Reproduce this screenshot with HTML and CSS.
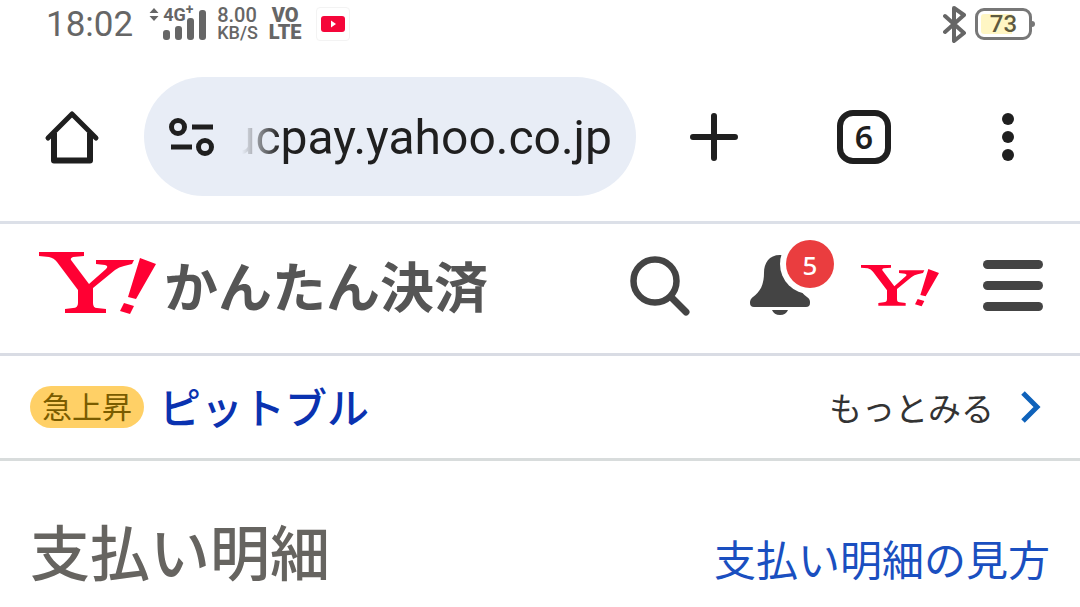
FILE: index.html
```html
<!DOCTYPE html>
<html lang="ja">
<head>
    <meta charset="utf-8">
    <meta name="viewport" content="width=device-width, initial-scale=1">
    <title>支払い明細</title>
    <link rel="stylesheet" href="styles.css">
</head>
<body>
    <div class="status">
        <span class="time">18:02</span>
        <div class="signal">
            <svg width="10" height="14" viewBox="0 0 10 14"><path d="M5 0l4.500 5h-9zM5 13l4.500-5h-9z" fill="#666"/></svg>
            <div class="net">
                <svg width="46" height="32" viewBox="0 0 46 32" fill="#666">
                    <rect x="0" y="22" width="7" height="10" rx="3"/>
                    <rect x="12" y="18" width="7" height="14" rx="3"/>
                    <rect x="24" y="10" width="7" height="22" rx="3"/>
                    <rect x="36" y="2" width="7" height="30" rx="3"/>
                </svg>
                <span class="net-type">4G<sup>+</sup></span>
            </div>
        </div>
        <div class="speed"><span>8.00</span><span class="unit">KB/S</span></div>
        <div class="volte"><span>VO</span><span>LTE</span></div>
        <div class="app">
            <svg width="26" height="18" viewBox="0 0 26 18"><rect x="1" y="1" width="24" height="16" rx="3" fill="#f5063a"/><path d="M11 5.500v7l5-3.500z" fill="#fff"/></svg>
        </div>
        <div class="status-right">
            <svg width="24" height="38" viewBox="0 0 24 38" fill="none" stroke="#666" stroke-width="4" stroke-linejoin="round" stroke-linecap="round"><path d="M2 11l19 17-10 8V3l10 7L2 27"/></svg>
            <div class="battery"><span>73</span></div>
        </div>
    </div>

    <div class="toolbar">
        <button class="tool" aria-label="ホーム">
            <svg width="56" height="58" viewBox="0 0 56 58" fill="none" stroke="#1f1f1f" stroke-width="6" stroke-linejoin="round"><path d="M4 30L28 6l24 24" stroke-width="5" stroke-linecap="round"/><path d="M10 25v27.500h36V25"/></svg>
        </button>
        <div class="address">
            <svg width="48" height="40" viewBox="0 0 48 40" fill="none" stroke="#1f1f1f" stroke-width="5"><circle cx="10" cy="10" r="6.500"/><circle cx="37" cy="30" r="6.500"/><path d="M24 10h21M3 30h21"/></svg>
            <input type="text" class="url" aria-label="アドレス" value="ucpay.yahoo.co.jp">
        </div>
        <div class="tools">
            <button class="tool" aria-label="新しいタブ">
                <svg width="48" height="48" viewBox="0 0 48 48" stroke="#1f1f1f" stroke-width="6" stroke-linecap="round"><path d="M3 24h42M24 3v42"/></svg>
            </button>
            <button class="tool tabs" aria-label="タブ一覧">6</button>
            <button class="tool dots" aria-label="メニュー">
                <svg width="12" height="48" viewBox="0 0 12 48" fill="#1f1f1f"><circle cx="6" cy="6" r="6"/><circle cx="6" cy="24" r="6"/><circle cx="6" cy="42" r="6"/></svg>
            </button>
        </div>
    </div>

    <!-- Y! ロゴ -->
    <svg class="defs" width="0" height="0">
        <symbol id="logo" viewBox="0 0 117 63">
            <path fill="#ff0033" d="M0 0H45V4L34 5Q31 6 32 8L50 32L67 17Q70 14 66 13L57 12V8H95L93 12L85 14Q80 15 76 18L54 36V51Q54 56 58 56L67 57V61H26V57L34 56Q39 56 39 51V38L18 10Q15 6 10 5L0 4zM101 6L117 12L97 47L89 45zM85 51L95 54L91 62L81 59z"/>
        </symbol>
    </svg>

    <div class="header">
        <a href="#" class="brand">
            <svg width="117" height="63" aria-label="Yahoo!"><use href="#logo"/></svg>
            <span>かんたん決済</span>
        </a>
        <div class="menu">
            <button aria-label="検索">
                <svg width="60" height="60" viewBox="0 0 60 60" fill="none" stroke="#444" stroke-linecap="round"><circle cx="25" cy="25" r="21.500" stroke-width="6.500"/><path d="M41 41l15 15" stroke-width="7"/></svg>
            </button>
            <button class="bell" aria-label="お知らせ">
                <svg width="60" height="61" viewBox="0 0 60 61" fill="#444"><path d="M30 0C19 0 14 8 14 18C14 30 10 37 3 42C0 44 0 47 0 48Q0 52 4 52H56Q60 52 60 48C60 46 60 44 57 42C50 37 46 30 46 18C46 8 41 0 30 0zM22 55h16q-2 5-8 5t-8-5z"/></svg>
                <span class="count">5</span>
            </button>
            <a href="#" class="home-link"><svg width="78" height="42" aria-label="Yahoo!"><use href="#logo"/></svg></a>
            <button aria-label="メニュー">
                <svg width="60" height="52" viewBox="0 0 60 52" fill="#444"><rect width="60" height="9" rx="4.500"/><rect y="21" width="60" height="9" rx="4.500"/><rect y="42" width="60" height="9" rx="4.500"/></svg>
            </button>
        </div>
    </div>

    <div class="trend">
        <span class="label">急上昇</span>
        <a href="#" class="word">ピットブル</a>
        <a href="#" class="more">もっとみる
            <svg width="22" height="34" viewBox="0 0 22 34" fill="none" stroke="#0f62ba" stroke-width="5"><path d="M3 3l14 14L3 31"/></svg>
        </a>
    </div>

    <div class="title">
        <h1>支払い明細</h1>
        <a href="#">支払い明細の見方</a>
    </div>
</body>
</html>
```

FILE: styles.css
```css
* {
    margin: 0;
    padding: 0;
    box-sizing: border-box;
}
body {
    background: #fff;
    font-family: Roboto, "Noto Sans CJK JP", sans-serif;
    overflow-x: hidden;
}
a {
    text-decoration: none;
}
button {
    border: 0;
    background: none;
    font-family: inherit;
    cursor: pointer;
}
svg {
    display: block;
    flex: none;
}
.defs {
    position: absolute;
}

/* ステータスバー */
.status {
    display: flex;
    align-items: center;
    height: 48px;
    padding: 0 48px 0 46px;
    color: #666;
}
.time {
    font-size: 35px;
}
.signal {
    display: flex;
    margin-left: 16px;
}
.signal > svg {
    margin-right: 4px;
}
.net {
    position: relative;
}
.net-type {
    position: absolute;
    left: 0;
    top: -2px;
    font-size: 18px;
    line-height: 18px;
    font-weight: bold;
}
.net-type sup {
    font-size: 14px;
    line-height: 0;
}
.speed,
.volte {
    display: flex;
    flex-direction: column;
    font-size: 20px;
    line-height: 17px;
    font-weight: 500;
}
.speed {
    margin-left: 8px;
}
.unit {
    font-size: 18px;
}
.volte {
    margin-left: 11px;
    align-items: center;
    font-weight: 900;
}
.app {
    display: flex;
    align-items: center;
    justify-content: center;
    width: 34px;
    height: 34px;
    margin-left: 14px;
    border: 1px solid #f3f3f3;
    border-radius: 4px;
}
.status-right {
    display: flex;
    align-items: center;
    gap: 8px;
    margin-left: auto;
}
.battery {
    position: relative;
    width: 57px;
    height: 32px;
    padding: 3px;
    border: 3px solid #777;
    border-radius: 9px;
    text-align: center;
    font-size: 24px;
    line-height: 20px;
    font-weight: 500;
    color: #5e5a40;
    background: linear-gradient(90deg, #fff6c4 70%, #fff 70%) content-box;
}
.battery:after {
    content: "";
    position: absolute;
    right: -6px;
    top: 10px;
    width: 3px;
    height: 6px;
    border-radius: 0 3px 3px 0;
    background: #777;
}

/* ブラウザのツールバー */
.toolbar {
    display: flex;
    align-items: center;
    padding: 29px 66px 25px 44px;
    border-bottom: 3px solid #dce0e8;
}
.tool {
    display: flex;
    align-items: center;
    justify-content: center;
    color: #1f1f1f;
}
.address {
    display: flex;
    align-items: center;
    flex: 1;
    min-width: 0;
    height: 119px;
    margin: 0 54px 0 44px;
    padding: 0 24px;
    border-radius: 60px;
    background: #e8edf6;
}
.url {
    flex: 1;
    min-width: 0;
    padding-top: 2px;
    border: 0;
    outline: 0;
    background: none;
    font-family: inherit;
    font-size: 48px;
    text-align: right;
    color: #1f1f1f;
    -webkit-mask-image: linear-gradient(90deg, transparent 26px, #000 64px);
    mask-image: linear-gradient(90deg, transparent 26px, #000 64px);
}
.tools {
    display: flex;
    align-items: center;
    justify-content: space-between;
    width: 324px;
}
.tabs {
    width: 54px;
    height: 54px;
    border: 6px solid #1f1f1f;
    border-radius: 16px;
    font-family: "Noto Sans", sans-serif;
    font-size: 32px;
    line-height: 42px;
    font-weight: 600;
}
.dots {
    padding-left: 12px;
}

/* ヘッダー */
.header {
    display: flex;
    align-items: center;
    justify-content: space-between;
    height: 132px;
    padding: 0 37px 6px 39px;
    border-bottom: 3px solid #d9dce4;
}
.brand {
    display: flex;
    align-items: flex-start;
    gap: 8px;
    font-size: 54px;
    line-height: 60px;
    font-weight: bold;
    color: #555;
}
.brand span {
    padding-top: 8px;
}
.menu {
    display: flex;
    align-items: center;
}
.bell {
    position: relative;
    margin-left: 60px;
}
.count {
    position: absolute;
    left: 36px;
    top: -15px;
    width: 48px;
    height: 48px;
    border-radius: 50%;
    box-shadow: 0 0 0 6px #fff;
    background: #ea3d3f;
    font-family: "Noto Sans", sans-serif;
    font-size: 26px;
    line-height: 50px;
    font-weight: 500;
    color: #fff;
}
.home-link {
    margin: 0 44px 0 51px;
}

/* 急上昇ワード */
.trend {
    display: flex;
    align-items: center;
    height: 105px;
    padding: 0 38px 0 30px;
    border-bottom: 3px solid #d8dcdc;
}
.label {
    padding: 2px 12px 0;
    border-radius: 21px;
    background: #ffd066;
    font-size: 30px;
    line-height: 40px;
    color: #7a5c00;
}
.word {
    margin-left: 15px;
    padding-bottom: 4px;
    font-size: 42px;
    font-weight: 500;
    color: #0a32b0;
}
.more {
    display: flex;
    align-items: center;
    gap: 26px;
    margin-left: auto;
    font-size: 33px;
    color: #333;
}

/* 見出し */
.title {
    display: flex;
    align-items: baseline;
    justify-content: space-between;
    padding: 45px 30px 0;
}
.title h1 {
    font-size: 60px;
    font-weight: 500;
    color: #666460;
}
.title a {
    font-size: 42px;
    color: #1a4fc0;
}
```
